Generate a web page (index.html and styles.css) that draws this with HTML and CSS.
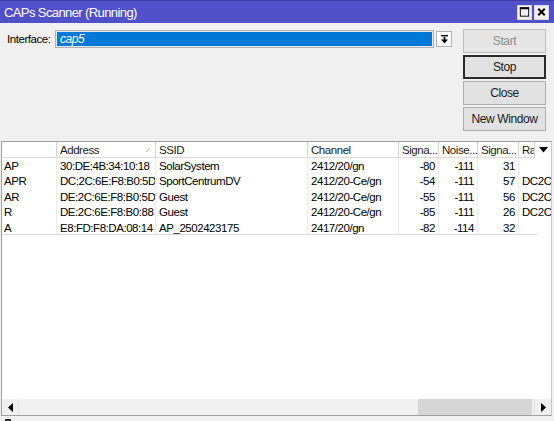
FILE: index.html
```html
<!DOCTYPE html>
<html>
<head>
<meta charset="utf-8">
<title>CAPs Scanner</title>
<link rel="stylesheet" href="styles.css">
</head>
<body>
<div class="window">
  <div class="titlebar">
    <span class="title">CAPs Scanner (Running)</span>
    <div class="wbtns">
      <span class="wbtn"><svg width="14" height="14" viewBox="0 0 14 14"><rect x="2.5" y="2.5" width="9" height="9" fill="none" stroke="#000" stroke-width="1"/><rect x="2" y="2" width="10" height="2" fill="#000"/></svg></span>
      <span class="wbtn"><svg width="14" height="14" viewBox="0 0 14 14"><path d="M3.5 3.5 L10.5 10.5 M10.5 3.5 L3.5 10.5" stroke="#000" stroke-width="2.2"/></svg></span>
    </div>
  </div>
  <div class="body">
    <div class="top">
      <div class="form">
        <span class="label">Interface:</span>
        <div class="select"><span class="value">cap5</span></div>
        <span class="dd"><svg width="9" height="9" viewBox="0 0 9 9"><rect x="1" y="0" width="7" height="1.4" fill="#000"/><rect x="3.6" y="2" width="1.8" height="3" fill="#000"/><path d="M1 4.5 H8 L4.5 8.5 Z" fill="#000"/></svg></span>
      </div>
      <div class="actions">
        <button class="btn" disabled>Start</button>
        <button class="btn default">Stop</button>
        <button class="btn">Close</button>
        <button class="btn">New Window</button>
      </div>
    </div>
    <div class="list">
      <div class="grid">
        <div class="row head">
          <span class="c c0"></span>
          <span class="c c1">Address<svg class="sort" width="6" height="6" viewBox="0 0 6 6"><path d="M1 5 L4.5 1" stroke="#b8b8b8" stroke-width="1" fill="none"/></svg></span>
          <span class="c c2">SSID</span>
          <span class="c c3">Channel</span>
          <span class="c c4">Signa...</span>
          <span class="c c5">Noise...</span>
          <span class="c c6">Signa...</span>
          <span class="c c7">Ra</span>
          <span class="colpick"><svg width="9" height="6" viewBox="0 0 9 6"><path d="M0 0 H9 L4.5 5.5 Z" fill="#000"/></svg></span>
        </div>
        <div class="row"><span class="c c0">AP</span><span class="c c1">30:DE:4B:34:10:18</span><span class="c c2">SolarSystem</span><span class="c c3">2412/20/gn</span><span class="c c4 num">-80</span><span class="c c5 num">-111</span><span class="c c6 num">31</span><span class="c c7"></span></div>
        <div class="row"><span class="c c0">APR</span><span class="c c1">DC:2C:6E:F8:B0:5D</span><span class="c c2">SportCentrumDV</span><span class="c c3">2412/20-Ce/gn</span><span class="c c4 num">-54</span><span class="c c5 num">-111</span><span class="c c6 num">57</span><span class="c c7">DC2C</span></div>
        <div class="row"><span class="c c0">AR</span><span class="c c1">DE:2C:6E:F8:B0:5D</span><span class="c c2">Guest</span><span class="c c3">2412/20-Ce/gn</span><span class="c c4 num">-55</span><span class="c c5 num">-111</span><span class="c c6 num">56</span><span class="c c7">DC2C</span></div>
        <div class="row"><span class="c c0">R</span><span class="c c1">DE:2C:6E:F8:B0:88</span><span class="c c2">Guest</span><span class="c c3">2412/20-Ce/gn</span><span class="c c4 num">-85</span><span class="c c5 num">-111</span><span class="c c6 num">26</span><span class="c c7">DC2C</span></div>
        <div class="row"><span class="c c0">A</span><span class="c c1">E8:FD:F8:DA:08:14</span><span class="c c2">AP_2502423175</span><span class="c c3">2417/20/gn</span><span class="c c4 num">-82</span><span class="c c5 num">-114</span><span class="c c6 num">32</span><span class="c c7"></span></div>
      </div>
      <div class="hscroll">
        <span class="arrow"><svg width="7" height="9" viewBox="0 0 7 9"><path d="M6 0 V9 L1 4.5 Z" fill="#000"/></svg></span>
        <div class="track"><div class="thumb"></div></div>
        <span class="arrow"><svg width="7" height="9" viewBox="0 0 7 9"><path d="M1 0 V9 L6 4.5 Z" fill="#000"/></svg></span>
      </div>
    </div>
    <div class="status"><span class="mark"></span></div>
  </div>
</div>
</body>
</html>
```
FILE: styles.css
```css
* { box-sizing: border-box; }

html, body {
  margin: 0;
  padding: 0;
  background: #f0f0f0;
}

body {
  font-family: "Liberation Sans", Arial, sans-serif;
  font-size: 11.5px;
  letter-spacing: -0.45px;
  color: #000;
}

.window {
  width: 554px;
  height: 421px;
  display: flex;
  flex-direction: column;
  background: #f0f0f0;
  overflow: hidden;
}

/* caption */
.titlebar {
  height: 23px;
  flex: none;
  display: flex;
  align-items: center;
  justify-content: space-between;
  background: #5050c8;
  border-top: 1px solid #3c3ca8;
  padding: 0 5px 0 4px;
}

.title {
  color: #fff;
  font-size: 13px;
  letter-spacing: -0.6px;
}

.wbtns {
  display: flex;
  gap: 2px;
}

.wbtn {
  width: 15px;
  height: 15px;
  display: flex;
  align-items: center;
  justify-content: center;
  background: #f0f0f0;
  border: 1px solid #d8d8e8;
}

.body {
  flex: 1;
  display: flex;
  flex-direction: column;
  padding: 0 2px 0 1px;
}

/* interface picker + command buttons */
.top {
  display: flex;
  justify-content: space-between;
  height: 118px;
  flex: none;
}

.form {
  display: flex;
  align-items: center;
  height: 16px;
  margin-top: 8px;
  padding-left: 6px;
}

.label {
  width: 49px;
}

.select {
  width: 377px;
  height: 16px;
  background: #0078d7;
  border: 1px solid #e8e8e8;
  outline: 1px solid #b0b0b0;
  display: flex;
  align-items: center;
  padding-left: 3px;
}

.value {
  color: #fff;
  font-style: italic;
  font-size: 12px;
}

.dd {
  width: 16px;
  height: 16px;
  margin-left: 3px;
  display: flex;
  align-items: center;
  justify-content: center;
  background: #fdfdfd;
  border: 1px solid #b4b4b4;
}

.actions {
  display: flex;
  flex-direction: column;
  gap: 2px;
  margin-top: 6px;
  margin-right: 6px;
}

.btn {
  width: 83px;
  height: 24px;
  font: inherit;
  font-size: 12px;
  font-weight: normal;
  letter-spacing: -0.4px;
  color: #1a1a1a;
  background: #e1e1e1;
  border: 1px solid #adadad;
  padding: 0;
}

.btn:disabled {
  color: #8d8d8d;
  background: #e6e6e6;
  border-color: #bfbfbf;
}

.btn.default {
  border: 2px solid #2b2b2b;
}

/* scanner results */
.list {
  flex: none;
  height: 275px;
  display: flex;
  flex-direction: column;
  background: #fff;
  border: 1px solid #a0a0a0;
  border-right-color: #c8c8c8;
}

.grid {
  flex: 1;
  overflow: hidden;
}

.row {
  display: flex;
  height: 15.4px;
  line-height: 16px;
  white-space: nowrap;
}

.row.head {
  position: relative;
  height: 16px;
  line-height: 17px;
  border-bottom: 1px solid #dcdcdc;
  color: #1a1a1a;
}

.c {
  flex: none;
  overflow: hidden;
  padding-left: 3px;
  border-right: 1px solid #ececec;
}

.head .c {
  border-right-color: #d5d5d5;
}

.row:last-child {
  border-bottom: 1px solid #dadada;
  width: 535px;
}

.num {
  text-align: right;
  padding-right: 3px;
  padding-left: 0;
}

.c0 { width: 55px; padding-left: 2px; }
.c1 { width: 99px; position: relative; }
.c2 { width: 152px; }
.c3 { width: 91px; }
.c4 { width: 40px; }
.c5 { width: 39px; }
.c6 { width: 41px; }
.c7 { width: 32px; border-right: none; }

.sort {
  position: absolute;
  right: 4px;
  top: 5px;
}

.colpick {
  position: absolute;
  right: 0;
  top: 0;
  width: 17px;
  height: 16px;
  background: #fff;
  border-left: 1px solid #d5d5d5;
  display: flex;
  align-items: center;
  justify-content: center;
}

.hscroll {
  flex: none;
  height: 17px;
  display: flex;
  background: #f0f0f0;
  border-top: 1px solid #fff;
}

.arrow {
  width: 16px;
  display: flex;
  align-items: center;
  justify-content: center;
  background: #f0f0f0;
}

.track {
  flex: 1;
  display: flex;
  justify-content: flex-end;
  padding-right: 2px;
  border-left: 1px solid #e2e2e2;
  border-right: 1px solid #e2e2e2;
}

.thumb {
  width: 114px;
  background: #d6d6d6;
}

.status {
  flex: 1;
  padding: 3px 0 0 4px;
}

.mark {
  display: block;
  width: 6px;
  height: 2px;
  background: #2a2a2a;
}
```
